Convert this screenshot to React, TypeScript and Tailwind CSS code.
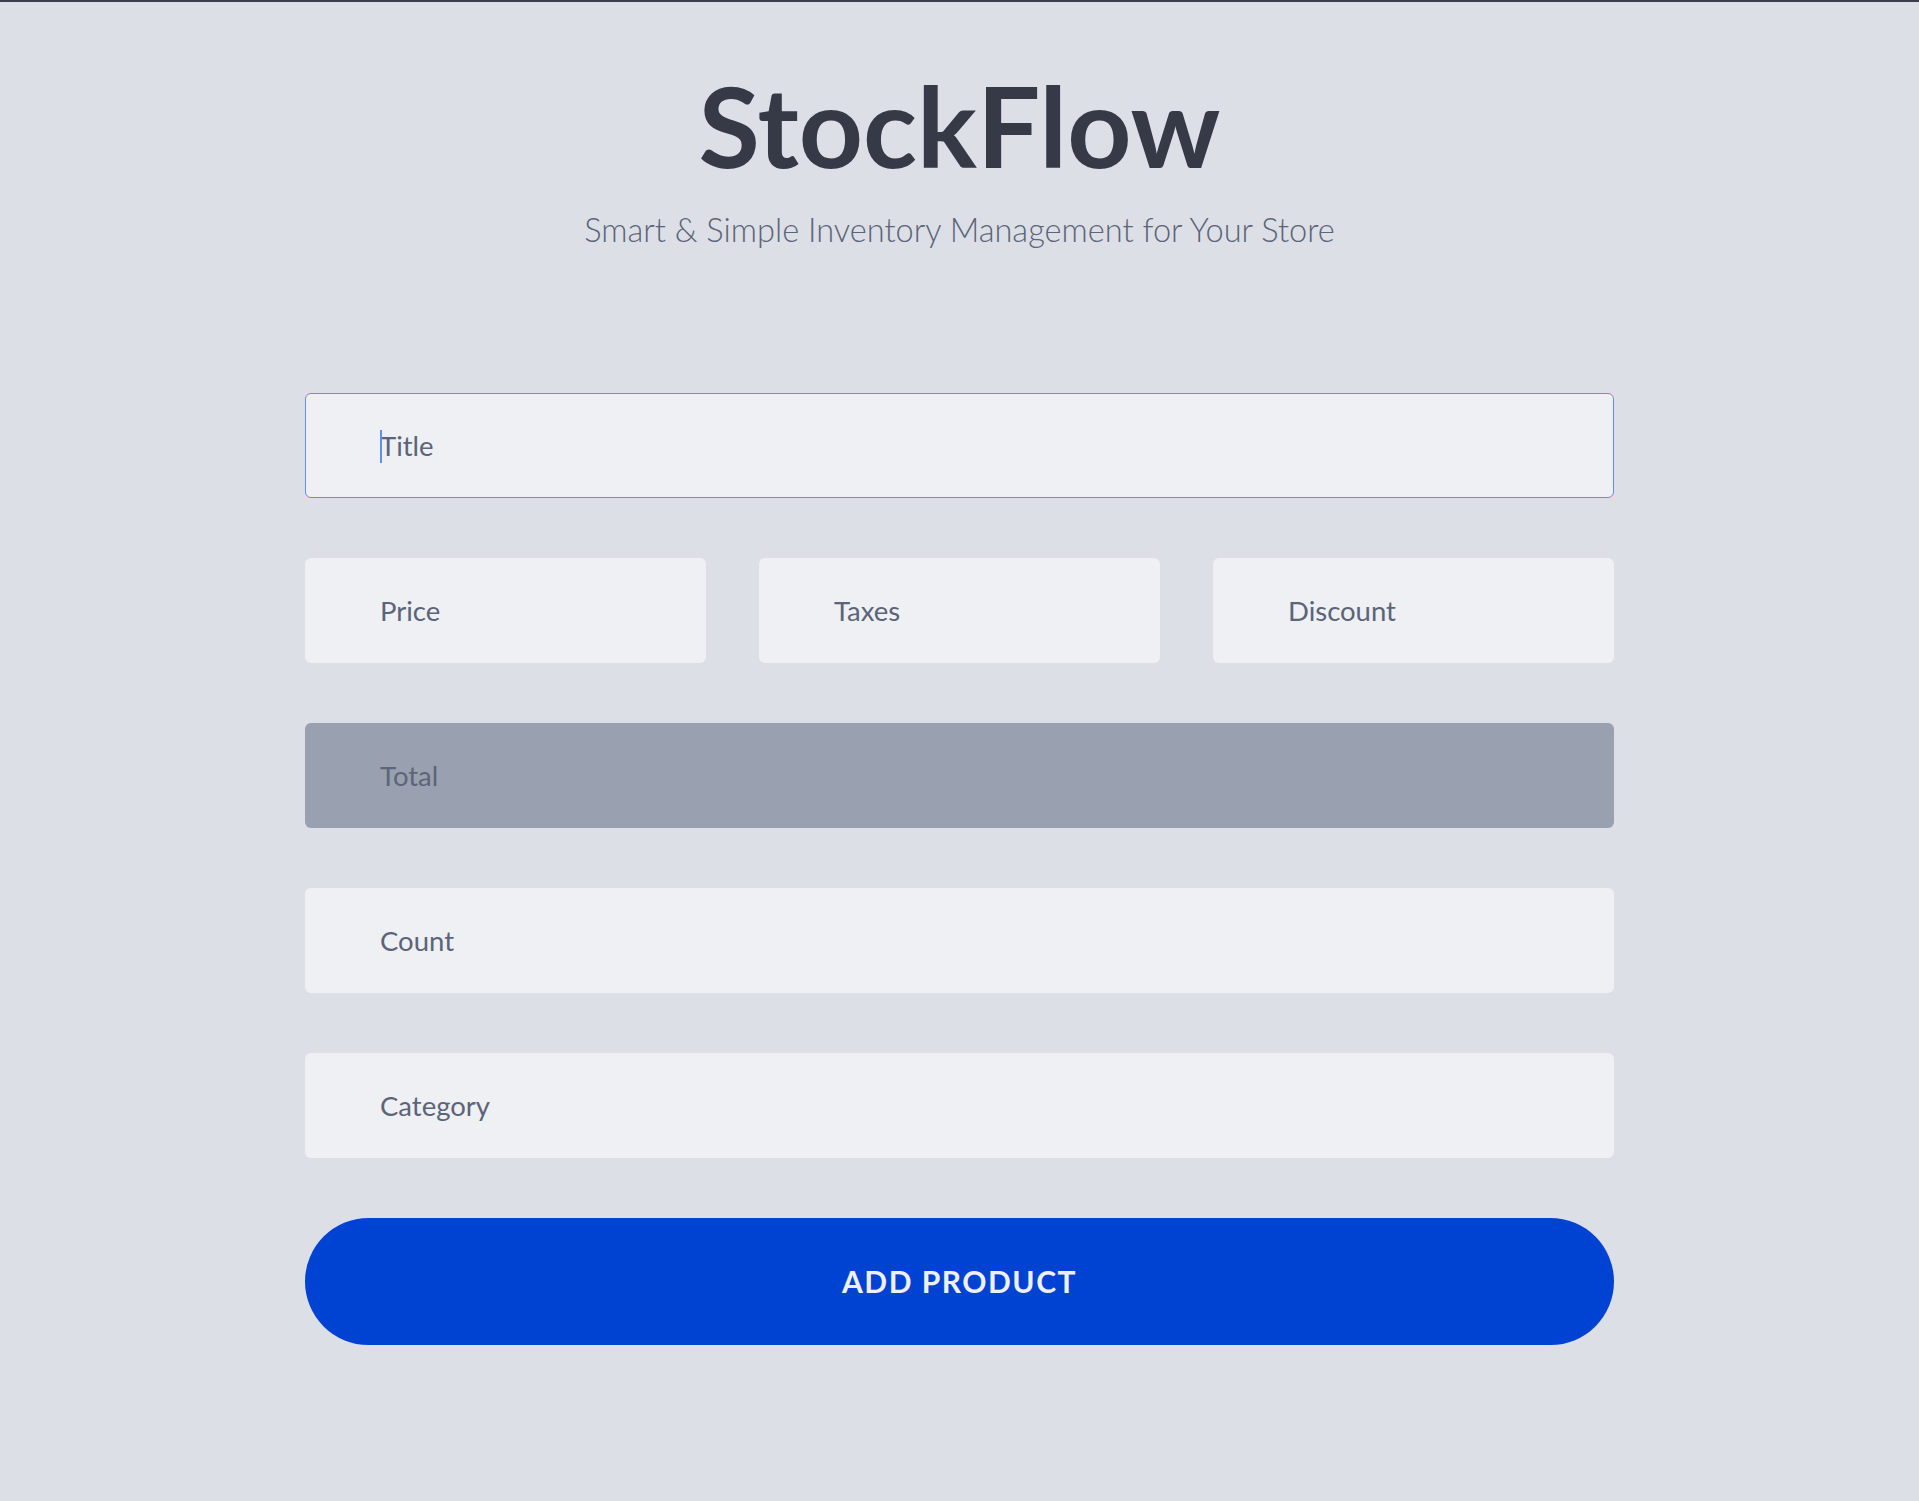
import React from 'react';

const fieldBase =
  "w-full h-[105px] rounded-md bg-[#eef0f4] pl-[74px] pr-6 text-[27.5px] text-[#5b6478] placeholder:text-[#5b6478] outline-none border border-transparent";

export default function App() {
  return (
    <div className="min-h-[1501px] bg-[#dcdfe6]" style={{ fontFamily: 'Lato, "Open Sans", sans-serif' }}>
      <div className="h-[2px] bg-[#3b3f4b]" />
      <header className="pt-[67px] text-center">
        <h1 className="text-[112px] font-bold leading-none text-[#363a46]">StockFlow</h1>
        <p className="mt-[29px] text-[32.6px] font-light leading-[1.2] text-[#5b6478]">
          Smart &amp; Simple Inventory Management for Your Store
        </p>
      </header>

      <form className="mx-auto mt-[143.5px] flex w-[1309px] flex-col gap-[60px]" onSubmit={(e) => e.preventDefault()}>
        <div className="relative">
          <input
            type="text"
            placeholder="Title"
            autoFocus
            className={fieldBase + " !border-[#5f8ff5] caret-[#5f8ff5]"}
          />
          {/* caret of the focused field */}
          <span className="pointer-events-none absolute left-[75px] top-[37px] h-[33px] w-[2px] bg-[#5f8ff5]" />
        </div>
        <div className="grid grid-cols-3 gap-[53px]">
          <input type="number" placeholder="Price" className={fieldBase} />
          <input type="number" placeholder="Taxes" className={fieldBase} />
          <input type="number" placeholder="Discount" className={fieldBase} />
        </div>
        <input
          type="text"
          placeholder="Total"
          readOnly
          className="w-full h-[105px] rounded-md bg-[#99a0b0] pl-[74px] pr-6 text-[27.5px] text-[#5d6577] placeholder:text-[#5d6577] outline-none border border-transparent"
        />
        <input type="number" placeholder="Count" className={fieldBase} />
        <input type="text" placeholder="Category" className={fieldBase} />
        <button
          type="submit"
          className="h-[127px] w-full rounded-full bg-[#0043d3] text-[30px] font-bold tracking-[1.5px] text-[#eef0f4]"
        >
          ADD PRODUCT
        </button>
      </form>
    </div>
  );
}
